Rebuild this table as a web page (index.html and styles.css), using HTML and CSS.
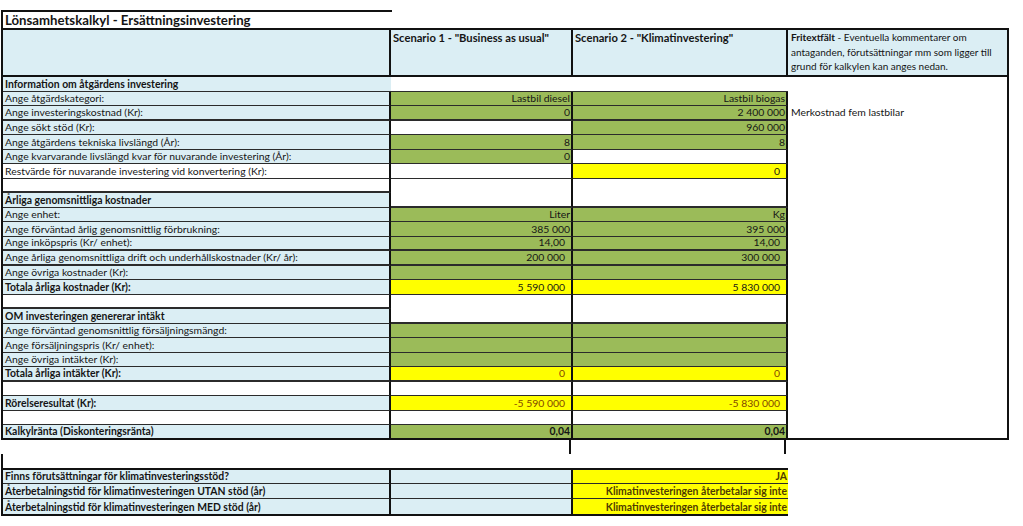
FILE: index.html
```html
<!DOCTYPE html>
<html lang="sv">
<head>
<meta charset="utf-8">
<title>Lönsamhetskalkyl - Ersättningsinvestering</title>
<link rel="stylesheet" href="styles.css">
</head>
<body>
<div class="sheet">
  <div class="title">Lönsamhetskalkyl - Ersättningsinvestering</div>

  <div class="grid main">
    <div class="c a blue hdr"></div>
    <div class="c b blue hdr scen">Scenario 1 - "Business as usual"</div>
    <div class="c b blue hdr scen">Scenario 2 - "Klimatinvestering"</div>
    <div class="c d blue hdr wrap">
      <p class="free"><b>Fritextfält</b><span> - Eventuella kommentarer om</span></p>
      <p class="free">antaganden, förutsättningar mm som ligger till</p>
      <p class="free">grund för kalkylen kan anges nedan.</p>
    </div>

    <div class="c d note">Merkostnad fem lastbilar</div>

    <div class="c a blue bold nr">Information om åtgärdens investering</div>
    <div class="c w nr"></div>
    <div class="c w nr"></div>

    <div class="c a blue">Ange åtgärdskategori:</div>
    <div class="c b g r">Lastbil diesel</div>
    <div class="c b g r">Lastbil biogas</div>

    <div class="c a blue thick">Ange investeringskostnad (Kr):</div>
    <div class="c b g r thick">0</div>
    <div class="c b g r thick">2 400 000</div>

    <div class="c a blue">Ange sökt stöd (Kr):</div>
    <div class="c b w"></div>
    <div class="c b g r">960 000</div>

    <div class="c a blue">Ange åtgärdens tekniska livslängd (År):</div>
    <div class="c b g r">8</div>
    <div class="c b g r">8</div>

    <div class="c a blue">Ange kvarvarande livslängd kvar för nuvarande investering (År):</div>
    <div class="c b g r">0</div>
    <div class="c b w"></div>

    <div class="c a w">Restvärde för nuvarande investering vid konvertering (Kr):</div>
    <div class="c b w"></div>
    <div class="c b y r pad">0</div>

    <div class="c a w thick"></div>
    <div class="c b w span2 thick"></div>
    <div class="c b w span2 thick"></div>

    <div class="c a blue bold">Årliga genomsnittliga kostnader</div>

    <div class="c a blue">Ange enhet:</div>
    <div class="c b g r">Liter</div>
    <div class="c b g r">Kg</div>

    <div class="c a blue">Ange förväntad årlig genomsnittlig förbrukning:</div>
    <div class="c b g r">385 000</div>
    <div class="c b g r">395 000</div>

    <div class="c a blue thick">Ange inköpspris (Kr/ enhet):</div>
    <div class="c b g r pad thick">14,00</div>
    <div class="c b g r pad thick">14,00</div>

    <div class="c a blue thick">Ange årliga genomsnittliga drift och underhållskostnader (Kr/ år):</div>
    <div class="c b g r pad thick">200 000</div>
    <div class="c b g r pad thick">300 000</div>

    <div class="c a blue">Ange övriga kostnader (Kr):</div>
    <div class="c b g"></div>
    <div class="c b g"></div>

    <div class="c a blue bold">Totala årliga kostnader (Kr):</div>
    <div class="c b y r pad">5 590 000</div>
    <div class="c b y r pad">5 830 000</div>

    <div class="c a w thick"></div>
    <div class="c b w span2 thick"></div>
    <div class="c b w span2 thick"></div>

    <div class="c a blue bold">OM investeringen genererar intäkt</div>

    <div class="c a blue">Ange förväntad genomsnittlig försäljningsmängd:</div>
    <div class="c b g"></div>
    <div class="c b g"></div>

    <div class="c a blue">Ange försäljningspris (Kr/ enhet):</div>
    <div class="c b g"></div>
    <div class="c b g"></div>

    <div class="c a blue">Ange övriga intäkter (Kr):</div>
    <div class="c b g"></div>
    <div class="c b g"></div>

    <div class="c a blue bold thick">Totala årliga intäkter (Kr):</div>
    <div class="c b y r pad brown thick">0</div>
    <div class="c b y r pad brown thick">0</div>

    <div class="c a w"></div>
    <div class="c b w"></div>
    <div class="c b w"></div>

    <div class="c a blue bold">Rörelseresultat (Kr):</div>
    <div class="c b y r pad brown">-5 590 000</div>
    <div class="c b y r pad brown">-5 830 000</div>

    <div class="c a w"></div>
    <div class="c b w"></div>
    <div class="c b w"></div>

    <div class="c a blue bold last">Kalkylränta (Diskonteringsränta)</div>
    <div class="c b g r bold last">0,04</div>
    <div class="c b g r bold last">0,04</div>
  </div>

  <div class="grid tail">
    <div class="t"></div>
    <div class="t vr"></div>
    <div class="t vr"></div>
    <div class="t vl"></div>
  </div>

  <div class="grid bottom">
    <div class="c a blue bold">Finns förutsättningar för klimatinvesteringsstöd?</div>
    <div class="c b blue"></div>
    <div class="c b y r bold brown2">JA</div>

    <div class="c a blue bold">Återbetalningstid för klimatinvesteringen UTAN stöd (år)</div>
    <div class="c b blue"></div>
    <div class="c b y r bold brown2">Klimatinvesteringen återbetalar sig inte</div>

    <div class="c a blue bold nb">Återbetalningstid för klimatinvesteringen MED stöd (år)</div>
    <div class="c b blue nb"></div>
    <div class="c b y r bold brown2 nb">Klimatinvesteringen återbetalar sig inte</div>
  </div>
</div>
</body>
</html>
```

FILE: styles.css
```css
html, body {
  margin: 0;
  background: #ffffff;
}

body {
  font-family: Lato, "Open Sans", "Liberation Sans", sans-serif;
  font-size: 10.4px;
  color: #151515;
}

.sheet {
  padding: 10px 0 0 1px;
}

.title {
  box-sizing: border-box;
  width: 391px;
  height: 18px;
  border-top: 2px solid #111;
  border-left: 2px solid #111;
  padding-left: 2px;
  font-size: 13.2px;
  font-weight: 700;
  line-height: 16px;
  white-space: nowrap;
}

.grid {
  display: grid;
  grid-template-columns: 388px 182px 215px 221px;
}

.main {
  grid-template-rows: 47px repeat(25, 14.52px);
  border-top: 2px solid #111;
  border-left: 2px solid #111;
  width: 1006px;
}

.c {
  box-sizing: border-box;
  display: flex;
  align-items: flex-end;
  padding: 0 2px 0 2px;
  line-height: 13px;
  white-space: nowrap;
  overflow: hidden;
  border-bottom: 1px solid #2b2b2b;
  border-right: 2px solid #111;
}

.hdr {
  align-items: flex-start;
  line-height: 14.5px;
  border-bottom: 2px solid #111;
}

.scen {
  font-weight: 700;
  font-size: 11.2px;
  padding-top: 1px;
}

.wrap {
  flex-direction: column;
  padding-left: 3px;
}

.free {
  margin: 0;
  font-size: 10px;
  line-height: 14.5px;
  white-space: nowrap;
}

.a { grid-column: 1; }

.d {
  grid-column: 4;
}

.note {
  grid-row: 2 / span 25;
  align-items: flex-start;
  padding: 29px 3px 0 3px;
  border-bottom: 2px solid #111;
}

.blue { background: #dbeef4; }
.g { background: #9bbb59; }
.y { background: #ffff00; }
.w { background: #ffffff; }

.bold { font-weight: 700; }

.r { justify-content: flex-end; padding-right: 1px; }
.pad { padding-right: 6px; }

.brown { color: #7f4600; }
.brown2 { color: #4f3b00; }

.nr { border-right: none; }

.thick { border-bottom-width: 2px; }

.span2 { grid-row: span 2; }

.last { border-bottom: 2px solid #111; }

.tail {
  grid-template-rows: 14px 14px;
}

.t { box-sizing: border-box; }
.vr { border-right: 2px solid #111; }
.vl { grid-column: 1; border-left: 2px solid #111; }

.bottom {
  grid-template-columns: 388px 182px 215px;
  grid-template-rows: repeat(3, 14.6px);
  width: 787px;
  border: 2px solid #111;
  box-sizing: border-box;
}

.bottom .c:nth-child(3n) { border-right: none; }
.nb { border-bottom: none; }
```
